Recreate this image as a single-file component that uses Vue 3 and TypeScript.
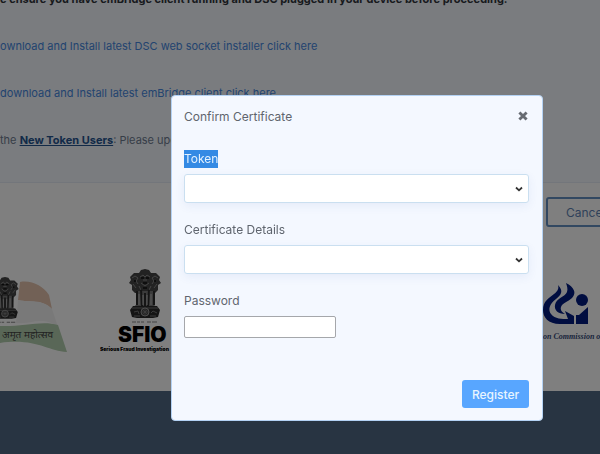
<script setup lang="ts">
import { ref } from 'vue'

const open = ref(true)
const token = ref('')
const certificate = ref('')
const password = ref('')
</script>

<template>
  <div class="page">
    <section class="notes">
      <p class="line strong">e ensure you have emBridge client running and DSC plugged in your device before proceeding.</p>
      <p class="line"><a href="#">ownload and Install latest DSC web socket installer click here</a></p>
      <p class="line"><a href="#">download and Install latest emBridge client click here</a></p>
      <p class="line muted">the <a class="users" href="#">New Token Users</a>: Please update</p>
    </section>

    <div class="actions"><button class="cancel" type="button">Cancel</button></div>

    <div class="logos">
      <svg class="defs" width="0" height="0" aria-hidden="true">
        <symbol id="emblem" viewBox="0 0 32 54">
          <path d="M10 4 12 1 16 0 20 1 22 4 27 4 31 8 30 11 32 14 29 16 29 21 26 24 6 24 3 21 3 16 0 14 2 11 1 8 5 4Z" fill="#444" />
          <path d="M7 22h19l-1 14 3 2H4l3-2Z" fill="#777" />
          <path d="M8 22v14M12 20l1 17M16 24v13M20 20l-1 17M25 22v14" stroke="#2a2a2a" stroke-width="2" fill="none" />
          <path d="M10 25v11M14 26v10M18 26v10M22 25v11" stroke="#bbb" stroke-width="1" fill="none" />
          <path d="M3 9l3-2 3 2-2 3 2 3M29 9l-3-2-3 2 2 3-2 3M11 8l3-2 2 2 2-2 3 2M12 14l4 3 4-3M10 17l2 4M22 17l-2 4M14 11h4M4 15l3 4M28 15l-3 4" stroke="#888" stroke-width="1" fill="none" />
          <path d="M12 9h3M17 9h3M14 14h4M5 12h2M25 12h2M14 19h4" stroke="#111" stroke-width="1.5" />
          <path d="M4 37h24l3 4-2 7-5 1H8l-5-1-2-7Z" fill="#2a2a2a" />
          <path d="M3 39h26M5 47h6M21 47h6M5 43l4-1 1 3M22 44l2-2 4 2" stroke="#777" fill="none" />
          <circle cx="16" cy="43" r="4" fill="#444" stroke="#999" />
          <path d="M16 39v8M12 43h8M13 40l6 6M19 40l-6 6" stroke="#888" stroke-width=".6" />
          <path d="M3 53h4m1 0h3m1 0h3m3 0h4m1 0h5" stroke="#888" stroke-width="1.2" />
        </symbol>
      </svg>
      <svg class="mahotsav" viewBox="0 0 68 76" role="img" aria-label="अमृत महोत्सव">
        <path d="M20 5C32 3 43 9 49 18L52 32C42 22 30 26 18 23Z" fill="#e4c2ac" />
        <path d="M18 23C31 26 41 21 52 32L58 50C43 38 29 48 16 46Z" fill="#f3f3f3" />
        <path d="M0 49C22 50 42 43 58 48L67 75C47 74 36 61 0 66Z" fill="#b2ceae" />
        <use href="#emblem" x="-11" y="0" width="32" height="46" />
        <text x="2" y="61" font-size="10" class="hindi">अमृत महोत्सव</text>
      </svg>
      <svg class="sfio" viewBox="0 0 90 84" role="img" aria-label="SFIO">
        <use href="#emblem" x="28" y="0" width="34" height="54" />
        <text x="18" y="73" font-size="21" class="black">SFIO</text>
        <text x="0" y="82" font-size="5" class="black">Serious Fraud Investigation</text>
      </svg>
      <svg class="cvc" viewBox="0 0 90 64" role="img" aria-label="Central Vigilance Commission">
        <g fill="#001a80">
          <path d="M28 2C34 8 31 12 26 16 19 21 18 27 21 31 25 36 32 36 38 36L35 28 44 33V41H30C18 41 13 34 13 27 13 18 19 15 24 11 28 8 29 5 28 2Z" />
          <path d="M36 0C44 4 47 10 42 15 38 19 32 20 31 24 30 27 32 29 35 31 28 31 24 27 25 22 26 15 35 14 37 9 38 6 37 3 36 0Z" />
          <circle cx="52" cy="17" r="6" />
          <path d="M46 41V32H49L58 24V41Z" />
        </g>
        <text x="13" y="56" font-size="8" class="commission">on Commission of</text>
      </svg>
    </div>

    <footer class="footer"></footer>

    <div v-if="open" class="backdrop">
      <form class="modal" role="dialog" aria-labelledby="title" @submit.prevent>
        <header class="head">
          <h1 id="title">Confirm Certificate</h1>
          <button class="close" type="button" aria-label="Close" @click="open = false">
            <svg viewBox="0 0 10 10"><path d="M2 2l6 6M8 2L2 8" stroke="#666b72" stroke-width="2.4" /></svg>
          </button>
        </header>
        <div class="field">
          <label for="token"><span class="selected">Token</span></label>
          <div class="pick">
            <select id="token" v-model="token"><option value=""></option></select>
            <svg class="chevron" viewBox="0 0 8 6"><path d="M1 1.5l3 2.8 3-2.8" /></svg>
          </div>
        </div>
        <div class="field">
          <label for="certificate">Certificate Details</label>
          <div class="pick">
            <select id="certificate" v-model="certificate"><option value=""></option></select>
            <svg class="chevron" viewBox="0 0 8 6"><path d="M1 1.5l3 2.8 3-2.8" /></svg>
          </div>
        </div>
        <div class="field">
          <label for="password">Password</label>
          <input id="password" v-model="password" type="password" />
        </div>
        <div class="foot"><button class="register" type="submit">Register</button></div>
      </form>
    </div>
  </div>
</template>

<style>
body {
  margin: 0;
}
</style>

<style scoped>
* {
  box-sizing: border-box;
}
.page {
  display: flex;
  flex-direction: column;
  min-height: 100vh;
  overflow: hidden;
  font-family: Inter, "Noto Sans", sans-serif;
  font-size: 12px;
  color: #5f656e;
  background: #fff;
}
button {
  font: inherit;
}
.notes {
  margin-top: -24px;
  padding-bottom: 18px;
  background: #f4f8ff;
  border-bottom: 1px solid #e6edf6;
}
.line {
  margin: 0;
  font-size: 11px;
  line-height: 47px;
  white-space: nowrap;
}
.line a {
  color: #4688e0;
  text-decoration: none;
}
.strong {
  font-weight: 700;
  color: #30343a;
}
.muted {
  color: #6f7c90;
}
.line .users {
  color: #245490;
  font-weight: 700;
  text-decoration: underline;
}
.actions {
  display: flex;
  justify-content: flex-end;
  padding-top: 14px;
}
.cancel {
  flex: none;
  width: 88px;
  height: 30px;
  margin-right: -34px;
  padding: 0 0 0 18px;
  text-align: left;
  color: #5f83b4;
  background: transparent;
  border: 2px solid #6590c2;
  border-radius: 3px;
}
.logos {
  display: flex;
  align-items: flex-start;
  gap: 32px;
  padding: 42px 0 38px;
}
.defs {
  position: absolute;
}
.logos > svg {
  flex: none;
}
.mahotsav {
  width: 68px;
  height: 76px;
  margin-top: 8px;
}
.sfio {
  width: 90px;
  height: 84px;
}
.logos > .cvc {
  width: 90px;
  height: 64px;
  margin: 14px -20px 0 auto;
}
.hindi {
  font-family: "Noto Sans", "Noto Sans Devanagari", sans-serif;
  fill: #444;
}
.black {
  font-family: Inter, sans-serif;
  font-weight: 900;
  fill: #000;
}
.commission {
  font-family: "Liberation Serif", serif;
  font-style: italic;
  font-weight: 700;
  fill: #334878;
}
.footer {
  flex: 1;
  background: #506884;
}
.backdrop {
  position: fixed;
  inset: 0;
  display: flex;
  align-items: flex-start;
  justify-content: flex-end;
  padding: 95px 57px 33px;
  background: rgba(0, 0, 0, 0.5);
}
.modal {
  width: 372px;
  padding: 11px 13px 12px 12px;
  background: #f4f8ff;
  border: 1px solid #b4d2f4;
  border-radius: 4px;
}
.head {
  display: flex;
  align-items: center;
  justify-content: space-between;
  height: 18px;
  margin-bottom: 25px;
}
h1 {
  margin: 0;
  font-size: 12px;
  font-weight: 400;
}
.close {
  display: flex;
  padding: 0;
  background: none;
  border: 0;
}
.close svg {
  width: 12px;
  height: 12px;
}
.field {
  display: flex;
  flex-direction: column;
  align-items: flex-start;
  gap: 6px;
  margin-bottom: 18px;
}
label {
  line-height: 18px;
}
.selected {
  display: block;
  color: #e2f1ff;
  background: #348ae4;
}
.pick {
  display: grid;
  align-items: center;
  width: 100%;
}
.pick > * {
  grid-area: 1 / 1;
}
select {
  appearance: none;
  width: 100%;
  height: 29px;
  background: #fff;
  border: 1px solid #cadff0;
  border-radius: 3px;
  box-shadow: 0 3px 10px rgba(70, 90, 180, 0.08);
}
.chevron {
  justify-self: end;
  width: 8px;
  height: 6px;
  margin-right: 6px;
  fill: none;
  stroke: #333;
  stroke-width: 1.8;
  pointer-events: none;
}
input {
  width: 152px;
  height: 22px;
  background: #fff;
  border: 1px solid #a5a7ab;
  border-radius: 2px;
}
.foot {
  display: flex;
  justify-content: flex-end;
  padding-top: 24px;
}
.register {
  width: 67px;
  height: 28px;
  padding: 0;
  font-weight: 500;
  color: #e8f5ff;
  background: #58a6ff;
  border: 0;
  border-radius: 3px;
}
</style>
